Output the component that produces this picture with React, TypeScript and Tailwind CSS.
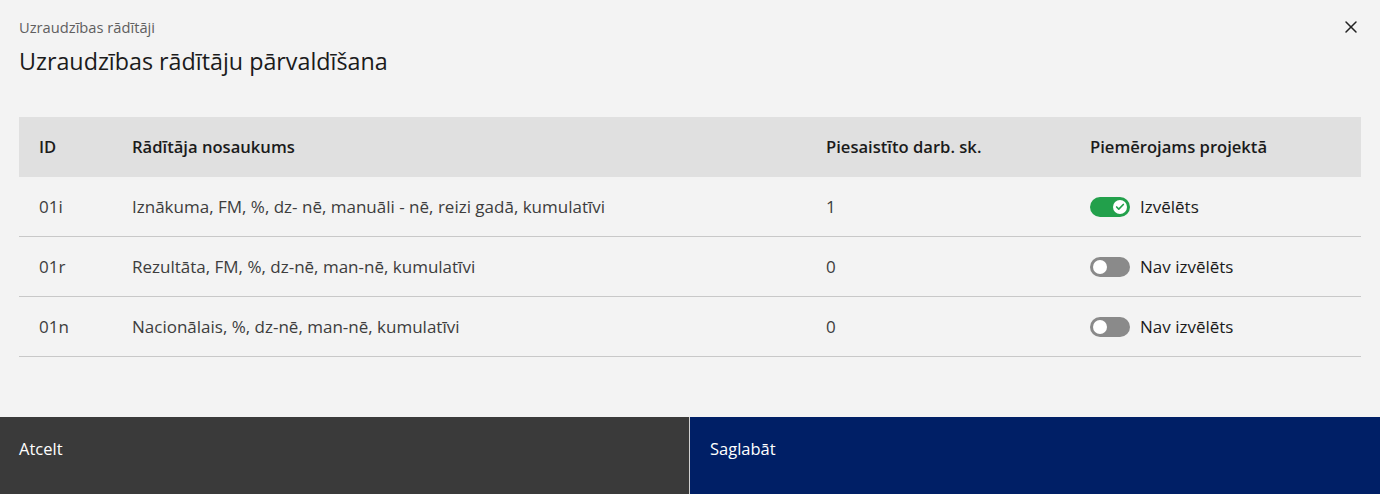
import { X, Check } from "lucide-react";

const rows = [
  { id: "01i", name: "Iznākuma, FM, %, dz- nē, manuāli - nē, reizi gadā, kumulatīvi", count: 1, on: true },
  { id: "01r", name: "Rezultāta, FM, %, dz-nē, man-nē, kumulatīvi", count: 0, on: false },
  { id: "01n", name: "Nacionālais, %, dz-nē, man-nē, kumulatīvi", count: 0, on: false },
];

function Toggle({ on }: { on: boolean }) {
  return (
    <div
      className={`flex h-5 w-10 items-center rounded-full px-[3px] ${
        on ? "justify-end bg-[#22a04b]" : "justify-start bg-[#8a8a8a]"
      }`}
    >
      <div className="flex h-[14px] w-[14px] items-center justify-center rounded-full bg-white">
        {on && <Check className="h-[10px] w-[10px] text-[#22a04b]" strokeWidth={4} />}
      </div>
    </div>
  );
}

export default function App() {
  return (
    <div className="flex h-[494px] w-full flex-col bg-[#f3f3f3] font-['Open_Sans','Noto_Sans',sans-serif] text-[#1b1b1b]">
      {/* Kopsavilkums */}
      <div className="flex items-start justify-between px-[19px] pt-[17px]">
        <div>
          <div className="text-[14.7px] leading-5 text-[#5f5f5f]">Uzraudzības rādītāji</div>
          <div className="mt-[8px] text-[23.3px] leading-8">Uzraudzības rādītāju pārvaldīšana</div>
        </div>
        <X className="mt-0 mr-0 h-5 w-5 text-[#222]" strokeWidth={1.8} />
      </div>

      {/* Tabula */}
      <div className="mx-[19px] mt-[40px]">
        <div className="grid h-[60px] grid-cols-[93px_694px_264px_1fr] items-center bg-[#e0e0e0] text-[16.6px] font-semibold">
          <div className="pl-5">ID</div>
          <div className="pl-5">Rādītāja nosaukums</div>
          <div className="pl-5">Piesaistīto darb. sk.</div>
          <div className="pl-5">Piemērojams projektā</div>
        </div>
        {rows.map((r) => (
          <div
            key={r.id}
            className="grid h-[60px] grid-cols-[93px_694px_264px_1fr] items-center border-b border-[#c8c8c8] text-[17px] text-[#3d3d3d]"
          >
            <div className="pl-5">{r.id}</div>
            <div className="pl-5">{r.name}</div>
            <div className="pl-5">{r.count}</div>
            <div className="flex items-center gap-[10px] pl-5 text-[#1b1b1b]">
              <Toggle on={r.on} />
              <span>{r.on ? "Izvēlēts" : "Nav izvēlēts"}</span>
            </div>
          </div>
        ))}
      </div>

      {/* Pogas */}
      <div className="mt-auto flex h-[77px] text-[16.5px] leading-6 text-white">
        <button className="flex w-[689px] items-start bg-[#3a3a3a] pt-[20px] pl-[19px] text-left">Atcelt</button>
        <div className="w-px bg-[#d0d0d0]" />
        <button className="flex flex-1 items-start bg-[#001f66] pt-[20px] pl-5 text-left">Saglabāt</button>
      </div>
    </div>
  );
}
